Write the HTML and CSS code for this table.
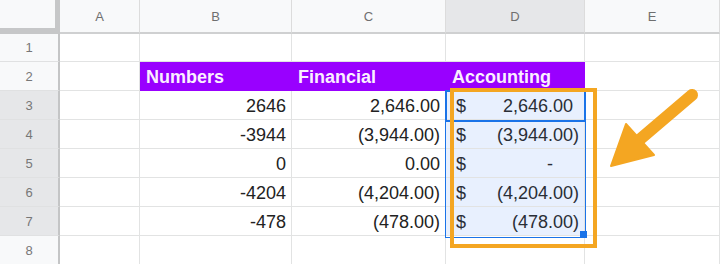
FILE: index.html
```html
<!DOCTYPE html>
<html>
<head>
<meta charset="utf-8">
<link rel="stylesheet" href="styles.css">
</head>
<body>
<div class="sheet">
  <div class="grid">
    <div class="corner"></div>
    <div class="colhead">A</div>
    <div class="colhead">B</div>
    <div class="colhead">C</div>
    <div class="colhead sel">D</div>
    <div class="colhead">E</div>

    <div class="rowhead">1</div>
    <div class="cell"></div><div class="cell"></div><div class="cell"></div><div class="cell"></div><div class="cell"></div>

    <div class="rowhead">2</div>
    <div class="cell"></div>
    <div class="cell title">Numbers</div>
    <div class="cell title">Financial</div>
    <div class="cell title">Accounting</div>
    <div class="cell"></div>

    <div class="rowhead sel">3</div>
    <div class="cell"></div>
    <div class="cell num">2646</div>
    <div class="cell num">2,646.00</div>
    <div class="cell acct"><span>$</span><span class="pos">2,646.00</span></div>
    <div class="cell"></div>

    <div class="rowhead sel">4</div>
    <div class="cell"></div>
    <div class="cell num">-3944</div>
    <div class="cell num">(3,944.00)</div>
    <div class="cell acct"><span>$</span><span>(3,944.00)</span></div>
    <div class="cell"></div>

    <div class="rowhead sel">5</div>
    <div class="cell"></div>
    <div class="cell num">0</div>
    <div class="cell num">0.00</div>
    <div class="cell acct"><span>$</span><span class="zero">-</span></div>
    <div class="cell"></div>

    <div class="rowhead sel">6</div>
    <div class="cell"></div>
    <div class="cell num">-4204</div>
    <div class="cell num">(4,204.00)</div>
    <div class="cell acct"><span>$</span><span>(4,204.00)</span></div>
    <div class="cell"></div>

    <div class="rowhead sel">7</div>
    <div class="cell"></div>
    <div class="cell num">-478</div>
    <div class="cell num">(478.00)</div>
    <div class="cell acct"><span>$</span><span>(478.00)</span></div>
    <div class="cell"></div>

    <div class="rowhead">8</div>
    <div class="cell"></div><div class="cell"></div><div class="cell"></div><div class="cell"></div><div class="cell"></div>
  </div>

  <div class="range"></div>
  <div class="active"></div>
  <div class="handle"></div>

  <svg class="annot" width="720" height="264" viewBox="0 0 720 264">
    <rect x="452" y="90" width="143" height="156" fill="none" stroke="#f4a622" stroke-width="4"/>
    <line x1="692" y1="95" x2="638" y2="141" stroke="#f4a622" stroke-width="12" stroke-linecap="round"/>
    <polygon points="611,166 626,124 654,155" fill="#f4a622" stroke="#f4a622" stroke-width="2" stroke-linejoin="round"/>
  </svg>
</div>
</body>
</html>
```

FILE: styles.css
```css
html, body {
  margin: 0;
  padding: 0;
  background: #ffffff;
  overflow: hidden;
}

.sheet {
  position: relative;
  width: 720px;
  height: 264px;
  font-family: "Liberation Sans", Arial, sans-serif;
}

.grid {
  display: grid;
  grid-template-columns: 60px 80px 152px 154px 139px 135px;
  grid-template-rows: 34px 28px repeat(7, 29px);
}

.grid > div {
  box-sizing: border-box;
}

.corner {
  background: #f8f9fa;
  border-right: 5px solid #c6c7c8;
  border-bottom: 6px solid #c6c7c8;
}

.colhead {
  background: #f8f9fa;
  border-right: 1px solid #dcdcdc;
  border-bottom: 2px solid #cfd0d1;
  color: #6f6f6f;
  font-size: 13px;
  display: flex;
  align-items: center;
  justify-content: center;
}

.colhead.sel {
  background: #e6e7e9;
}

.rowhead {
  background: #f8f9fa;
  border-right: 2px solid #c4c5c6;
  border-bottom: 1px solid #e0e1e2;
  color: #777777;
  font-size: 13px;
  display: flex;
  align-items: center;
  justify-content: center;
}

.rowhead.sel {
  background: #e6e7e9;
}

.cell {
  border-right: 1px solid #e2e3e3;
  border-bottom: 1px solid #e2e3e3;
  font-size: 18px;
  line-height: 20px;
  color: #222222;
  display: flex;
  align-items: flex-end;
  padding: 0 5px 3px 5px;
  white-space: nowrap;
}

.cell.title {
  background: #9900ff;
  border-right-color: #9900ff;
  border-bottom-color: #9900ff;
  color: #fbeeff;
  font-weight: bold;
  padding-left: 6px;
}

.cell.num {
  justify-content: flex-end;
}

.cell.acct {
  background: #e8f0fe;
  justify-content: space-between;
  padding-left: 10px;
  padding-right: 5px;
  color: #2a2e36;
}

.acct .pos {
  padding-right: 6px;
}

.acct .zero {
  padding-right: 26px;
}

.range {
  position: absolute;
  left: 445px;
  top: 91px;
  width: 139px;
  height: 145px;
  border: 1px solid #1a73e8;
}

.active {
  position: absolute;
  left: 445px;
  top: 90px;
  width: 137px;
  height: 28px;
  border: 2px solid #1a73e8;
}

.handle {
  position: absolute;
  left: 580px;
  top: 231px;
  width: 7px;
  height: 7px;
  background: #1a73e8;
}

.annot {
  position: absolute;
  left: 0;
  top: 0;
}
```
